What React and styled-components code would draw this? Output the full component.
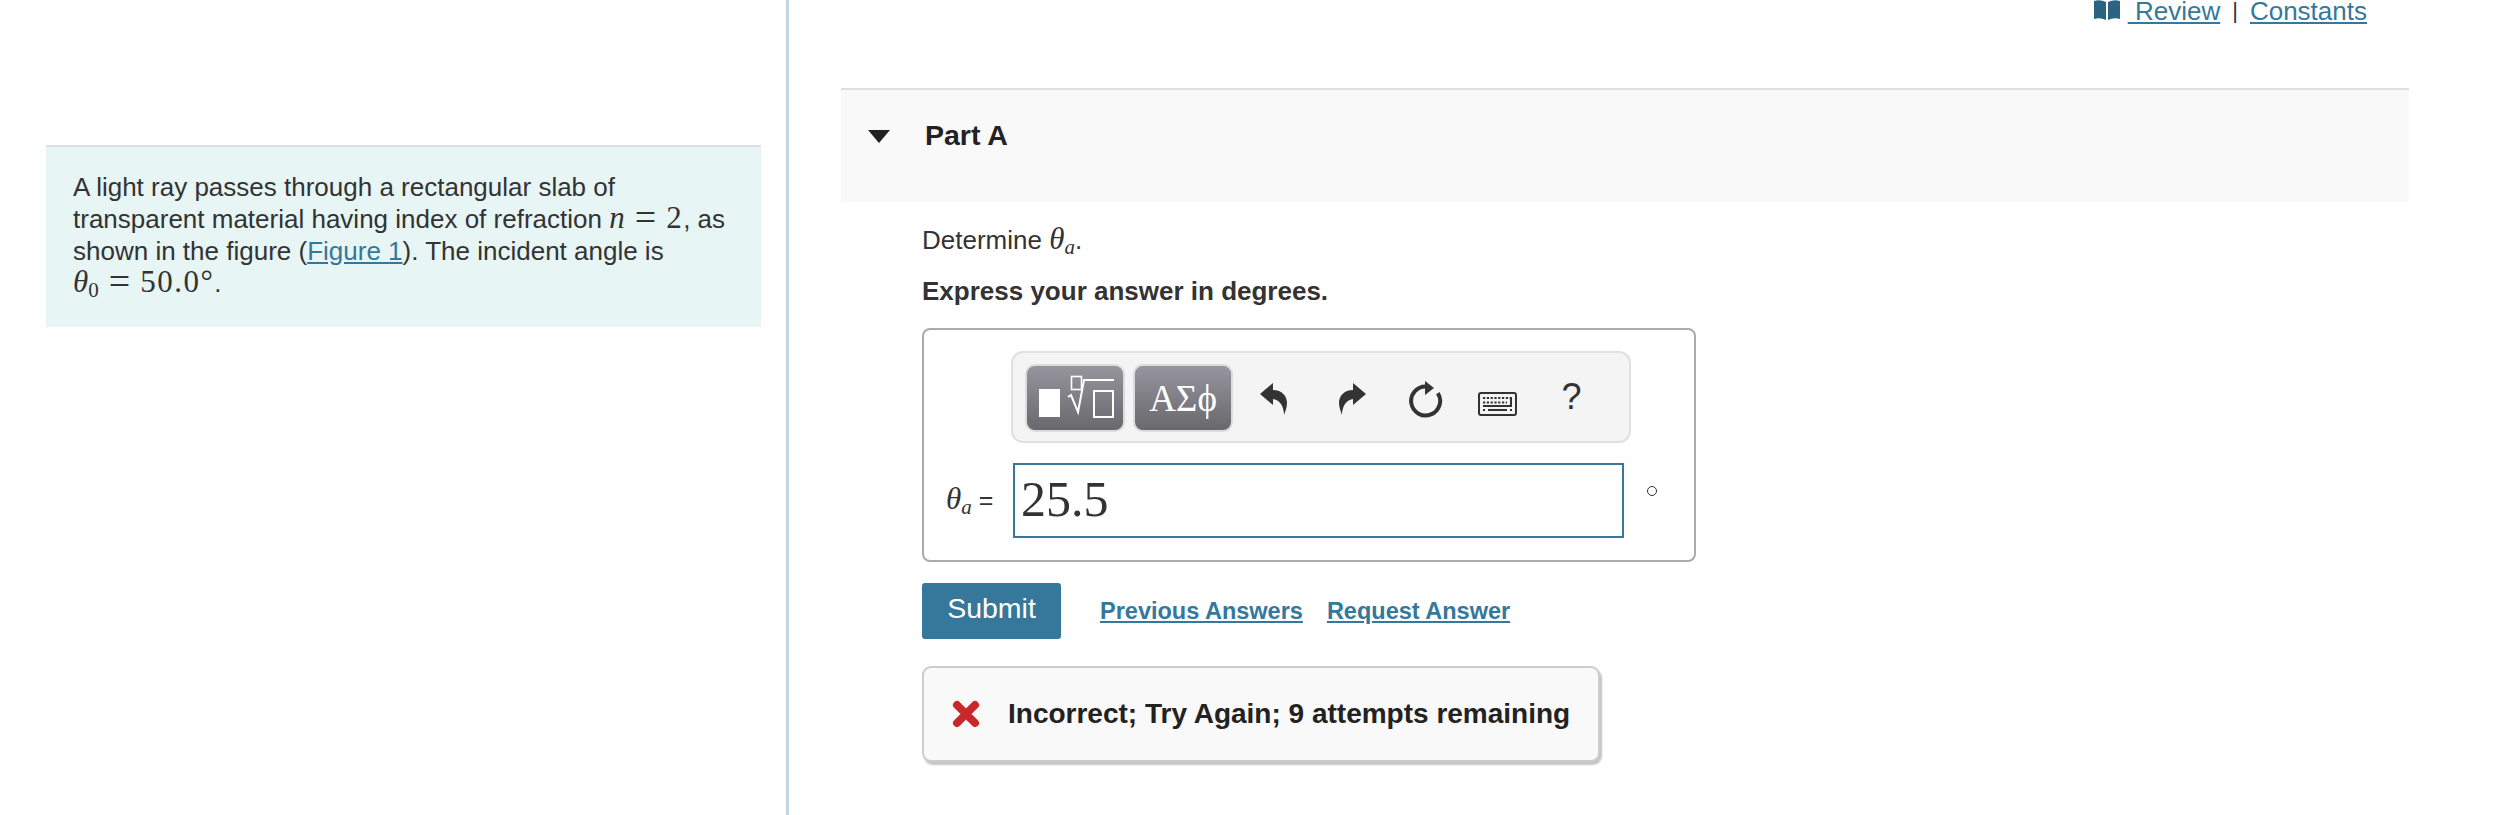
import React from "react";
import styled, { createGlobalStyle } from "styled-components";

const GlobalStyle = createGlobalStyle`
  html, body {
    margin: 0;
    padding: 0;
    background: #fff;
  }
  body {
    font-family: "Liberation Sans", Arial, sans-serif;
    color: #333;
    overflow: hidden;
  }
`;

const Page = styled.div`
  display: flex;
  width: 2501px;
  height: 815px;
  overflow: hidden;
`;

const LeftColumn = styled.div`
  width: 715px;
  padding: 145px 25px 0 46px;
  border-right: 3px solid #c6d5e4;
`;

const Intro = styled.div`
  box-sizing: border-box;
  height: 182px;
  background: #e7f5f5;
  border-top: 2px solid #dedede;
  padding: 24px 21px 0 27px;
  font-size: 26px;
  line-height: 32px;
`;

const TextLink = styled.a`
  color: #35789b;
  text-decoration: underline;
  font-weight: ${(p) => (p.$bold ? 700 : 400)};
`;

const MathText = styled.span`
  font-family: "Liberation Serif", "DejaVu Serif", serif;
  font-size: 31px;
  line-height: 0;
  font-style: ${(p) => (p.$plain ? "normal" : "italic")};
  letter-spacing: ${(p) => (p.$plain ? "1.5px" : "0")};
`;

const MathOp = styled(MathText)`
  font-size: 38px;
  margin: 0 10px;
  letter-spacing: 0;
  vertical-align: -2px;
`;

const Sub = styled.sub`
  font-family: "Liberation Serif", "DejaVu Serif", serif;
  font-size: 21px;
  line-height: 0;
  vertical-align: -5px;
  font-style: ${(p) => (p.$plain ? "normal" : "italic")};
`;

const RightColumn = styled.div`
  flex: 1;
  padding: 0 92px 0 52px;
  min-width: 0;
`;

const TopLinks = styled.div`
  height: 88px;
  display: flex;
  justify-content: flex-end;
  align-items: flex-start;
  font-size: 26px;
  line-height: 22px;
  padding-right: 42px;
`;

const BookWrap = styled.span`
  display: flex;
  margin-right: 8px;
`;

const ReviewLink = styled(TextLink)`
  white-space: pre;
`;

const Sep = styled.span`
  color: #333;
  font-size: 22px;
  margin: 0 12px;
`;

const PartHeader = styled.div`
  box-sizing: border-box;
  background: #f9f9f9;
  border-top: 2px solid #dedede;
  height: 114px;
  display: flex;
  align-items: flex-start;
  padding: 29px 0 0 27px;
  font-size: 28.5px;
  font-weight: 700;
  color: #222;
  line-height: 32px;
`;

const Caret = styled.span`
  width: 0;
  height: 0;
  border-left: 11px solid transparent;
  border-right: 11px solid transparent;
  border-top: 13px solid #222;
  margin: 11px 35px 0 0;
`;

const Content = styled.div`
  padding: 20px 0 0 81px;
`;

const Prompt = styled.p`
  margin: 0;
  font-size: 26px;
  line-height: 36px;
`;

const Instruction = styled(Prompt)`
  font-weight: 700;
  margin-top: 15px;
`;

const AnswerBox = styled.div`
  margin-top: 19px;
  width: 774px;
  height: 234px;
  box-sizing: border-box;
  border: 2px solid #aaa;
  border-radius: 8px;
  padding: 21px 0 0 12px;
`;

const Toolbar = styled.div`
  margin-left: 75px;
  width: 620px;
  height: 92px;
  box-sizing: border-box;
  background: #f4f4f4;
  border: 2px solid #e0e0e0;
  border-radius: 12px;
  display: flex;
  align-items: center;
  padding-left: 12px;
`;

const TemplateButton = styled.div`
  width: 100px;
  height: 68px;
  margin-top: 2px;
  box-sizing: border-box;
  background: linear-gradient(#96959d, #69686d);
  border: 2px solid #dcdcdc;
  border-radius: 10px;
  margin-right: 8px;
  display: flex;
  align-items: center;
  justify-content: center;
  color: #fff;
  font-family: "Liberation Serif", serif;
  font-size: 37px;
`;

const ToolIcon = styled.div`
  width: ${(p) => p.$w}px;
  margin-top: ${(p) => p.$top || 0}px;
  display: flex;
  justify-content: center;
  align-items: center;
  color: #333;
  font-size: 36px;
`;

const AnswerRow = styled.div`
  display: flex;
  align-items: center;
  margin-top: 20px;
`;

const Label = styled.div`
  width: 77px;
  padding-left: 10px;
  box-sizing: border-box;
  font-size: 25px;
  white-space: nowrap;
`;

const Field = styled.div`
  width: 611px;
  height: 75px;
  box-sizing: border-box;
  border: 2px solid #35789b;
  font-family: "Liberation Serif", serif;
  font-size: 50px;
  line-height: 68px;
  padding-left: 6px;
  color: #333;
`;

const Degree = styled.span`
  margin: -20px 0 0 23px;
  width: 10px;
  height: 10px;
  box-sizing: border-box;
  border: 1.5px solid #333;
  border-radius: 50%;
`;

const Actions = styled.div`
  display: flex;
  align-items: center;
  margin-top: 21px;
  font-size: 23.5px;
`;

const SubmitButton = styled.button`
  width: 139px;
  height: 56px;
  background: #35789b;
  color: #fff;
  border: 0;
  border-radius: 3px;
  font-family: inherit;
  font-size: 28.5px;
  padding: 0 0 6px;
  margin-right: 39px;
`;

const ActionLink = styled(TextLink)`
  margin-right: 24px;
`;

const Feedback = styled.div`
  margin-top: 27px;
  width: 678px;
  height: 96px;
  box-sizing: border-box;
  background: #f9f9f9;
  border: 2px solid #ccc;
  border-radius: 9px;
  box-shadow: 2px 3px 2px #c4c4c4;
  display: flex;
  align-items: center;
  padding-left: 28px;
  font-size: 28px;
  font-weight: 700;
  color: #222;
  white-space: nowrap;
`;

const CrossWrap = styled.span`
  display: flex;
  margin-right: 28px;
`;

const BookIcon = () => (
  <svg width="26" height="20" viewBox="0 0 26 20">
    <path d="M0 1Q6-1 12 2V20Q6 17 0 19zM14 2Q20-1 26 1V19Q20 17 14 20z" fill="#2b6480" />
  </svg>
);

const CrossIcon = () => (
  <svg width="28" height="28" viewBox="0 0 28 28">
    <path d="M5 5l18 18M23 5L5 23" stroke="#c9282b" strokeWidth="8" strokeLinecap="round" fill="none" />
  </svg>
);

const TemplatesGlyph = () => (
  <svg width="96" height="64" viewBox="0 0 96 64" fill="none">
    <rect x="12" y="23" width="21" height="28" fill="#fff" />
    <rect x="44.5" y="10.5" width="10" height="13" stroke="#fff" strokeWidth="1.6" />
    <path d="M41 31l3-2 7 17 6-32h30" stroke="#fff" strokeWidth="2" />
    <rect x="67" y="25" width="19" height="26" stroke="#fff" strokeWidth="2" />
  </svg>
);

const UndoIcon = ({ flip }) => (
  <svg width="27" height="32" viewBox="0 0 27 32" style={flip ? { transform: "scaleX(-1)" } : undefined}>
    <path d="M0 11L13 0V7C22 7 27 13 27 20C27 25 25 29 24 32C24 25 21 17 13 16V22Z" fill="#333" />
  </svg>
);

const ResetIcon = () => (
  <svg width="34" height="37" viewBox="0 0 34 37" fill="none">
    <path d="M28.8 12.1A14.5 14.5 0 1 1 17 5.5" stroke="#333" strokeWidth="4" />
    <path d="M16 0L25 7L16 14z" fill="#333" />
  </svg>
);

const KeyboardIcon = () => (
  <svg width="39" height="24" viewBox="0 0 39 24">
    <rect x="1" y="1" width="37" height="22" rx="2" fill="#f4f4f4" stroke="#333" strokeWidth="2" />
    <path d="M5 6h27M5 10.5h24M5 18h2M32 18h2" stroke="#333" strokeWidth="2" strokeDasharray="2.2 1.6" />
    <path d="M10 18h19M33 5v9H5" stroke="#333" strokeWidth="2" fill="none" />
  </svg>
);

export default function App() {
  return (
    <Page>
      <GlobalStyle />
      <LeftColumn>
        <Intro>
          A light ray passes through a rectangular slab of transparent material having index of refraction{" "}
          <MathText>n</MathText>
          <MathOp $plain>=</MathOp>
          <MathText $plain>2</MathText>, as shown in the figure (<TextLink href="#">Figure 1</TextLink>). The incident
          angle is <MathText>θ</MathText>
          <Sub $plain>0</Sub>
          <MathOp $plain>=</MathOp>
          <MathText $plain>50.0°</MathText>.
        </Intro>
      </LeftColumn>
      <RightColumn>
        <TopLinks>
          <BookWrap>
            <BookIcon />
          </BookWrap>
          <ReviewLink href="#"> Review</ReviewLink>
          <Sep>|</Sep>
          <TextLink href="#">Constants</TextLink>
        </TopLinks>
        <PartHeader>
          <Caret />
          Part A
        </PartHeader>
        <Content>
          <Prompt>
            Determine <MathText>θ</MathText>
            <Sub>a</Sub>.
          </Prompt>
          <Instruction>Express your answer in degrees.</Instruction>
          <AnswerBox>
            <Toolbar>
              <TemplateButton>
                <TemplatesGlyph />
              </TemplateButton>
              <TemplateButton>ΑΣϕ</TemplateButton>
              <ToolIcon $w={65} $top={4}>
                <UndoIcon />
              </ToolIcon>
              <ToolIcon $w={93} $top={4}>
                <UndoIcon flip />
              </ToolIcon>
              <ToolIcon $w={53} $top={4}>
                <ResetIcon />
              </ToolIcon>
              <ToolIcon $w={91} $top={14}>
                <KeyboardIcon />
              </ToolIcon>
              <ToolIcon $w={57}>?</ToolIcon>
            </Toolbar>
            <AnswerRow>
              <Label>
                <MathText>θ</MathText>
                <Sub>a</Sub> =
              </Label>
              <Field>25.5</Field>
              <Degree />
            </AnswerRow>
          </AnswerBox>
          <Actions>
            <SubmitButton>Submit</SubmitButton>
            <ActionLink href="#" $bold>
              Previous Answers
            </ActionLink>
            <ActionLink href="#" $bold>
              Request Answer
            </ActionLink>
          </Actions>
          <Feedback>
            <CrossWrap>
              <CrossIcon />
            </CrossWrap>
            Incorrect; Try Again; 9 attempts remaining
          </Feedback>
        </Content>
      </RightColumn>
    </Page>
  );
}
